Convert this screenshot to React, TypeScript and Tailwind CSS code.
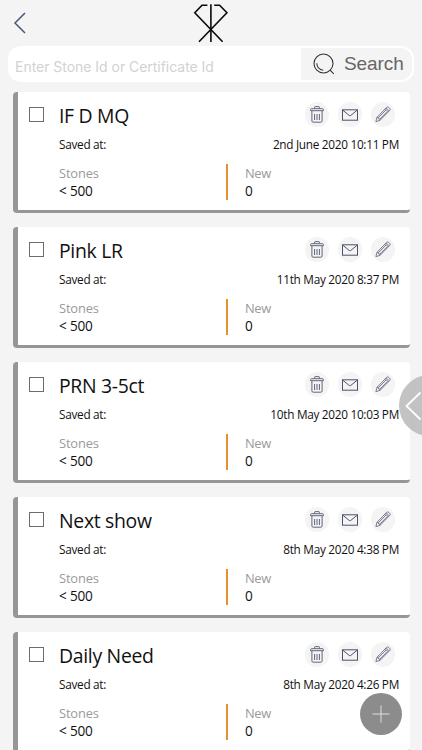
import { useState } from "react";

const searches = [
  { name: "IF D MQ", savedAt: "2nd June 2020 10:11 PM", stones: "< 500", added: 0 },
  { name: "Pink LR", savedAt: "11th May 2020 8:37 PM", stones: "< 500", added: 0 },
  { name: "PRN 3-5ct", savedAt: "10th May 2020 10:03 PM", stones: "< 500", added: 0 },
  { name: "Next show", savedAt: "8th May 2020 4:38 PM", stones: "< 500", added: 0 },
  { name: "Daily Need", savedAt: "8th May 2020 4:26 PM", stones: "< 500", added: 0 },
];

function TrashIcon() {
  return (
    <svg width="14" height="17" viewBox="0 0 14 17" fill="none" stroke="#62657a" strokeWidth="1">
      <path d="M4.6 2.6V1.2Q4.6.6 5.2.6H8.8Q9.4.6 9.4 1.2V2.6" />
      <path d="M1.5 2.7H12.5Q13.4 2.7 13.4 3.6V4.7H.6V3.6Q.6 2.7 1.5 2.7Z" />
      <path d="M1.9 4.8V14.9Q1.9 16.2 3.2 16.2H10.8Q12.1 16.2 12.1 14.9V4.8" />
      <path d="M4.6 8V14M7 8V14M9.4 8V14" />
    </svg>
  );
}

function MailIcon() {
  return (
    <svg width="16" height="12" viewBox="0 0 16 12" fill="none" stroke="#4d5269" strokeWidth="1">
      <rect x=".5" y=".8" width="15" height="10.4" />
      <path d="M.7 1.1L7.3 6.5Q8 7 8.7 6.5L15.3 1.1" />
    </svg>
  );
}

function PencilIcon() {
  return (
    <svg width="16" height="17" viewBox="0 0 16 17" fill="none" stroke="#6b6f84" strokeWidth="0.9" strokeLinejoin="round">
      <path d="M.9 15.6L2 11.3L11.7 1.3Q12.7.4 13.8 1.4L14.7 2.3Q15.7 3.4 14.7 4.5L5 14.4Z" />
      <path d="M2 11.3L3.4 11.6L3.6 12.9L4.9 13.1L5 14.4M10.3 2.8L13.3 5.9M11.2 1.9L14.2 4.9M3.5 11.6L11 4M4.9 13.1L12.4 5.4" />
    </svg>
  );
}

function Logo() {
  return (
    <svg width="36" height="40" viewBox="0 0 36 40" fill="none" stroke="#0a0a0a" strokeWidth="1.6">
      <path d="M14.4 2.2H9L1.8 9.8L29.6 38.8" />
      <path d="M21.2 2.2H26.6L33.9 9.8L6 38.8" />
      <path d="M17.9 1.2V39" />
    </svg>
  );
}

function SearchCard({ item }: { item: (typeof searches)[number] }) {
  const [checked, setChecked] = useState(false);

  return (
    <article className="flex h-[121px] shrink-0 rounded-[4px] border-b-[3px] border-l-[5px] border-[#969696] bg-white pl-[11px]">
      <button
        type="button"
        aria-label={item.name}
        onClick={() => setChecked(!checked)}
        data-checked={checked}
        className="mt-[15px] h-[15px] w-[15px] shrink-0 border border-[#6c6c6c] data-[checked=true]:bg-[#969696]"
      />
      <div className="ml-[15px] flex-1 pr-[11px]">
        <div className="flex h-[46px] items-center justify-between">
          <h2 className="pt-[2px] text-[19.4px] leading-none tracking-[-0.3px]">{item.name}</h2>
          <div className="mr-[4px] flex gap-[8.5px]">
            <button type="button" className="flex h-[24.5px] w-[24.5px] items-center justify-center rounded-full bg-[#f4f4f5]">
              <TrashIcon />
            </button>
            <button type="button" className="flex h-[24.5px] w-[24.5px] items-center justify-center rounded-full bg-[#f4f4f5]">
              <MailIcon />
            </button>
            <button type="button" className="flex h-[24.5px] w-[24.5px] items-center justify-center rounded-full bg-[#f4f4f5]">
              <PencilIcon />
            </button>
          </div>
        </div>
        <div className="flex h-3 items-center justify-between text-[11.8px] leading-[14px] tracking-[-0.29px]">
          <span>Saved at:</span>
          <span>{item.savedAt}</span>
        </div>
        <div className="mt-[14px] flex h-9 text-[13.6px] leading-[18px] tracking-[-0.2px]">
          <div className="w-[167px]">
            <p className="text-[12.9px] tracking-[-0.15px] text-[#9a9a9a]">Stones</p>
            <p>{item.stones}</p>
          </div>
          <div className="border-l-2 border-[#e8902e] pl-[17px]">
            <p className="text-[12.9px] tracking-[-0.4px] text-[#9a9a9a]">New</p>
            <p>{item.added}</p>
          </div>
        </div>
      </div>
    </article>
  );
}

export default function App() {
  return (
    <div className="relative flex h-[750px] w-full flex-col overflow-hidden bg-[#f4f4f4] font-['Open_Sans',sans-serif] text-[#111]">
      <header className="grid h-[46px] shrink-0 grid-cols-3 items-center">
        <button type="button" aria-label="Back" className="ml-[13px] w-fit">
          <svg width="14" height="22" viewBox="0 0 14 22" fill="none" stroke="#50547a" strokeWidth="1.5">
            <path d="M12 1L2 11L12 21" />
          </svg>
        </button>
        <div className="flex justify-center">
          <Logo />
        </div>
      </header>

      <div className="mx-2 flex h-9 w-[406px] shrink-0 overflow-hidden rounded-[13px] bg-white">
        <input
          type="text"
          placeholder="Enter Stone Id or Certificate Id"
          className="w-[293px] pl-[7px] pt-[4px] font-['Inter',sans-serif] text-[14px] tracking-[-0.03px] outline-none placeholder:text-[#d2d2d2]"
        />
        <button
          type="button"
          className="my-[2px] mr-[2px] flex flex-1 items-center rounded-r-[12px] bg-[#f4f4f4] pl-3 font-['Liberation_Sans',sans-serif] text-[19px] text-[#666]"
        >
          <svg width="22" height="22" viewBox="0 0 22 22" fill="none" stroke="#333" strokeWidth="1.1">
            <circle cx="10.5" cy="10.5" r="9.5" />
            <path d="M3.7 10.2Q4.3 16.3 10.2 17.3M17 17.1L20.8 20.8" />
          </svg>
          <span className="ml-[9px] tracking-[-0.1px]">Search</span>
        </button>
      </div>

      <main className="ml-[13px] mt-[9.5px] flex w-[397px] flex-col gap-[14px]">
        {searches.map((item) => (
          <SearchCard key={item.name} item={item} />
        ))}
      </main>

      <button
        type="button"
        aria-label="Open panel"
        className="absolute right-[-38px] top-[375px] h-[61px] w-[61px] rounded-full bg-[#bcbcbc]/90"
      >
        <svg className="ml-[6px]" width="17" height="30" viewBox="0 0 17 30" fill="none" stroke="white" strokeWidth="1.8">
          <path d="M15.5 1.5L1.5 15L15.5 28.5" />
        </svg>
      </button>

      <button
        type="button"
        aria-label="Add"
        className="absolute left-[360px] top-[693px] flex h-[42px] w-[42px] items-center justify-center rounded-full bg-[#8c8c8c]"
      >
        <svg width="18" height="18" viewBox="0 0 18 18" stroke="#dedede" strokeWidth="1">
          <path d="M9 .5V17.5M.5 9H17.5" />
        </svg>
      </button>
    </div>
  );
}
